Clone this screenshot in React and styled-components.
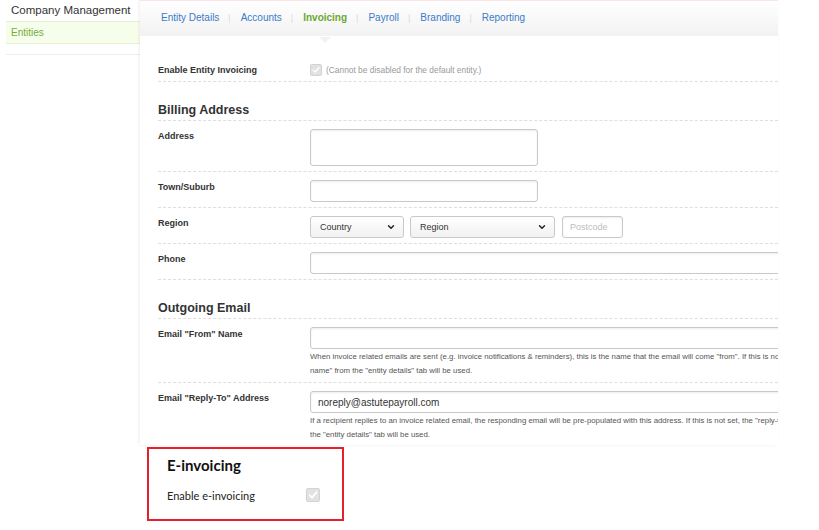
import React from "react";
import styled, { createGlobalStyle } from "styled-components";
import { ChevronDown } from "lucide-react";

const GlobalStyle = createGlobalStyle`
    body {
        margin: 0;
        background: #fff;
        font-family: "Liberation Sans", Arial, sans-serif;
        color: #333;
    }
`;

const Page = styled.div`
    width: 819px;
    height: 530px;
    overflow: hidden;
`;

const Top = styled.div`
    display: flex;
`;

const Sidebar = styled.div`
    width: 134px;
    padding-left: 6px;
`;

const SideTitle = styled.div`
    height: 21px;
    line-height: 20px;
    padding-left: 5px;
    font-size: 11.5px;
    color: #333;
    white-space: nowrap;
`;

const SideItem = styled.div`
    height: 21px;
    line-height: 21px;
    padding-left: 5px;
    font-size: 10px;
    color: ${(p) => (p.active ? "#74ad3c" : "#333")};
    background: ${(p) => (p.active ? "#f6fdeb" : "transparent")};
    border-top: 1px solid #e4f3cf;
    border-bottom: 1px solid #e4f3cf;
`;

const SideRule = styled.div`
    margin-top: 10px;
    border-top: 1px solid #eeeeee;
`;

const Panel = styled.div`
    position: relative;
    width: 638px;
    height: 444px;
    overflow: hidden;
    border-top: 1px solid #fbe4e7;
    box-shadow: -1px 0 3px rgba(0, 0, 0, 0.07);
`;

const TabBar = styled.div`
    display: flex;
    align-items: center;
    height: 33px;
    padding: 0 0 2px 21px;
    background: linear-gradient(#ffffff, #f2f2f2);
`;

const Tab = styled.span`
    position: relative;
    font-size: 10px;
    color: ${(p) => (p.active ? "#6da633" : "#3a7bc9")};
    font-weight: ${(p) => (p.active ? "bold" : "normal")};

    ${(p) =>
        p.active &&
        `
        &::after {
            content: "";
            position: absolute;
            left: 50%;
            top: 25px;
            margin-left: -6px;
            border-left: 6px solid transparent;
            border-right: 6px solid transparent;
            border-top: 6px solid #f2f2f2;
        }
    `}
`;

const Sep = styled.span`
    margin: 0 10px 0 9px;
    font-size: 9px;
    color: #dadada;
`;

const Form = styled.div`
    padding: 27px 0 0 18px;
`;

const Row = styled.div`
    display: grid;
    grid-template-columns: 152px 1fr;
    padding: ${(p) => (p.plain ? "0 0 4px" : "8px 0 5px")};
    border-bottom: 1px dashed #dedede;
`;

const Label = styled.div`
    font-size: 9px;
    font-weight: bold;
    line-height: 14px;
    color: #333;
`;

const Heading = styled.div`
    padding: 21px 0 3px;
    font-size: 12.5px;
    font-weight: bold;
    line-height: 14px;
    color: #333;
    border-bottom: 1px dashed #dedede;
`;

const Field = styled.div`
    display: flex;
    align-items: center;
    gap: ${(p) => p.gap || 0}px;
    min-width: 0;
`;

const Input = styled.input`
    box-sizing: border-box;
    width: ${(p) => p.w}px;
    height: 22px;
    flex: none;
    padding: 0 7px;
    border: 1px solid #c9c9c9;
    border-radius: 3px;
    box-shadow: inset 0 1px 2px rgba(0, 0, 0, 0.08);
    font-family: "Liberation Sans", Arial, sans-serif;
    font-size: ${(p) => (p.small ? 9 : 10)}px;
    color: #333;

    &::placeholder {
        color: #bdbdbd;
    }
`;

const TextArea = styled.textarea`
    box-sizing: border-box;
    width: 228px;
    height: 37px;
    border: 1px solid #c9c9c9;
    border-radius: 3px;
    box-shadow: inset 0 1px 2px rgba(0, 0, 0, 0.08);
    resize: none;
`;

const SelectWrap = styled.div`
    position: relative;
    flex: none;
    width: ${(p) => p.w}px;
    height: 22px;

    svg {
        position: absolute;
        right: 8px;
        top: 6px;
        pointer-events: none;
    }
`;

const Select = styled.select`
    appearance: none;
    box-sizing: border-box;
    width: 100%;
    height: 22px;
    padding: 0 9px;
    border: 1px solid #c9c9c9;
    border-radius: 3px;
    background: linear-gradient(#ffffff, #f1f1f1);
    font-family: "Liberation Sans", Arial, sans-serif;
    font-size: 9px;
    color: #333;
`;

const Check = styled.span`
    display: inline-flex;
    align-items: center;
    justify-content: center;
    flex: none;
    width: ${(p) => p.size}px;
    height: ${(p) => p.size}px;
    box-sizing: border-box;
    border: 1px solid #d3d3d3;
    border-radius: 2px;
    background: #e2e2e2;
`;

const Note = styled.span`
    margin-left: 4px;
    font-size: 8.4px;
    color: #999;
    white-space: nowrap;
`;

const Stack = styled.div`
    display: flex;
    flex-direction: column;
    min-width: 0;
`;

const Help = styled.div`
    font-size: 7.8px;
    line-height: 13px;
    color: #555;
    white-space: nowrap;
    padding-top: 1px;
`;

const Callout = styled.div`
    box-sizing: border-box;
    width: 197px;
    height: 74px;
    margin: 2px 0 0 147px;
    padding: 8px 0 0 18px;
    border: 2px solid #e5202b;
    font-family: Lato, "Liberation Sans", sans-serif;
`;

const CalloutTitle = styled.div`
    font-size: 15px;
    font-weight: bold;
    line-height: 16px;
    color: #111;
`;

const CalloutRow = styled.div`
    display: flex;
    align-items: center;
    margin-top: 14px;
    height: 16px;
`;

const CalloutLabel = styled.span`
    width: 139px;
    font-size: 11px;
    color: #222;
`;

const Tick = ({ size }) => (
    <Check size={size}>
        <svg width={size - 4} height={size - 4} viewBox="0 0 10 10">
            <path
                d="M1.5 5.2 L4 7.6 L8.6 2.2"
                fill="none"
                stroke="#fff"
                strokeWidth="1.8"
                strokeLinecap="round"
                strokeLinejoin="round"
            />
        </svg>
    </Check>
);

const SelectBox = ({ w, children }) => (
    <SelectWrap w={w}>
        <Select defaultValue={children}>
            <option>{children}</option>
        </Select>
        <ChevronDown size={10} strokeWidth={3.5} color="#222" />
    </SelectWrap>
);

const tabs = ["Entity Details", "Accounts", "Invoicing", "Payroll", "Branding", "Reporting"];

const App = () => (
    <Page>
        <GlobalStyle />
        <Top>
            <Sidebar>
                <SideTitle>Company Management</SideTitle>
                <SideItem active>Entities</SideItem>
                <SideRule />
            </Sidebar>
            <Panel>
                <TabBar>
                    {tabs.map((t, i) => (
                        <React.Fragment key={t}>
                            {i > 0 && <Sep>|</Sep>}
                            <Tab active={t === "Invoicing"}>{t}</Tab>
                        </React.Fragment>
                    ))}
                </TabBar>
                <Form>
                    <Row plain>
                        <Label>Enable Entity Invoicing</Label>
                        <Field>
                            <Tick size={12} />
                            <Note>(Cannot be disabled for the default entity.)</Note>
                        </Field>
                    </Row>

                    <Heading>Billing Address</Heading>
                    <Row>
                        <Label>Address</Label>
                        <Field>
                            <TextArea />
                        </Field>
                    </Row>
                    <Row>
                        <Label>Town/Suburb</Label>
                        <Field>
                            <Input w={228} />
                        </Field>
                    </Row>
                    <Row>
                        <Label>Region</Label>
                        <Field gap={6}>
                            <SelectBox w={94}>Country</SelectBox>
                            <SelectBox w={145}>Region</SelectBox>
                            <Input w={61} small placeholder="Postcode" style={{ marginLeft: 1 }} />
                        </Field>
                    </Row>
                    <Row>
                        <Label>Phone</Label>
                        <Field>
                            <Input w={520} />
                        </Field>
                    </Row>

                    <Heading>Outgoing Email</Heading>
                    <Row>
                        <Label>Email "From" Name</Label>
                        <Stack>
                            <Input w={520} />
                            <Help>
                                When invoice related emails are sent (e.g. invoice notifications &amp; reminders), this is the name that the email will come "from". If this is not set, the "business
                            </Help>
                            <Help>name" from the "entity details" tab will be used.</Help>
                        </Stack>
                    </Row>
                    <Row>
                        <Label>Email "Reply-To" Address</Label>
                        <Stack>
                            <Input w={520} defaultValue="noreply@astutepayroll.com" />
                            <Help>
                                If a recipient replies to an invoice related email, the responding email will be pre-populated with this address. If this is not set, the "reply-to address" from
                            </Help>
                            <Help>the "entity details" tab will be used.</Help>
                        </Stack>
                    </Row>
                </Form>
            </Panel>
        </Top>
        <Callout>
            <CalloutTitle>E-invoicing</CalloutTitle>
            <CalloutRow>
                <CalloutLabel>Enable e-invoicing</CalloutLabel>
                <Tick size={14} />
            </CalloutRow>
        </Callout>
    </Page>
);

export default App;
